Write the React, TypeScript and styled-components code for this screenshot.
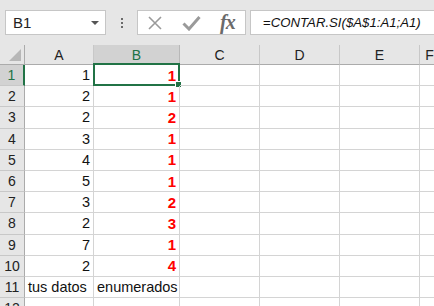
import styled, { createGlobalStyle } from "styled-components";

const GlobalStyle = createGlobalStyle`
  html, body {
    margin: 0;
    padding: 0;
    background: #e6e6e6;
    overflow: hidden;
  }
  body {
    font-family: "Liberation Sans", Arial, sans-serif;
  }
`;

const GREEN = "#217346";
const GRID = "#d4d4d4";
const HEAD_LINE = "#ababab";

// column widths incl. right border: header, A, B, C, D, E, F (partial)
const COLS = [25, 69, 86, 80, 80, 80, 20];
const LETTERS = ["A", "B", "C", "D", "E", "F"];

type Row = { a: string, b: string };

const rows: Row[] = [
    { a: "1", b: "1" },
    { a: "2", b: "1" },
    { a: "2", b: "2" },
    { a: "3", b: "1" },
    { a: "4", b: "1" },
    { a: "5", b: "1" },
    { a: "3", b: "2" },
    { a: "2", b: "3" },
    { a: "7", b: "1" },
    { a: "2", b: "4" },
];

const Page = styled.div`
  width: 434px;
  height: 306px;
  overflow: hidden;
  display: flex;
  flex-direction: column;
`;

const Toolbar = styled.div`
  height: 45px;
  flex-shrink: 0;
  display: flex;
  align-items: flex-start;
  padding: 10px 0 0 5px;
  box-sizing: border-box;
  & > * {
    flex-shrink: 0;
  }
`;

const NameBox = styled.div`
  width: 101px;
  height: 25px;
  box-sizing: border-box;
  background: #fff;
  border: 1px solid #c6c6c6;
  display: flex;
  align-items: center;
  justify-content: space-between;
  padding: 0 6px 0 7px;
  font-size: 15px;
  color: #222;
`;

const Caret = styled.span`
  width: 0;
  height: 0;
  border-left: 4px solid transparent;
  border-right: 4px solid transparent;
  border-top: 4px solid #555;
`;

const Grip = styled.div`
  width: 31px;
  height: 25px;
  display: flex;
  flex-direction: column;
  align-items: center;
  justify-content: center;
  gap: 2px;
  span {
    width: 2px;
    height: 2px;
    background: #6a6a6a;
  }
`;

const ButtonBox = styled.div`
  width: 109px;
  height: 25px;
  box-sizing: border-box;
  background: #fff;
  border: 1px solid #c6c6c6;
  display: flex;
  align-items: center;
  padding-left: 9px;
  gap: 19px;
`;

const FormulaBox = styled.div`
  flex: 1 1 auto !important;
  min-width: 0;
  height: 25px;
  margin-left: 4px;
  box-sizing: border-box;
  background: #fff;
  border: 1px solid #c6c6c6;
  border-right: none;
  display: flex;
  align-items: center;
  padding-left: 12px;
  font-size: 13.2px;
  color: #111;
  white-space: nowrap;
  overflow: hidden;
  i {
    font-style: italic;
  }
`;

const Sheet = styled.div`
  flex-shrink: 0;
  display: grid;
  grid-template-columns: ${COLS.map((c) => `${c}px`).join(" ")};
  grid-template-rows: 20px;
  grid-auto-rows: 21.2px;
  background: #fff;
`;

const Corner = styled.div`
  background: #e6e6e6;
  border-right: 1px solid ${HEAD_LINE};
  border-bottom: 1px solid ${HEAD_LINE};
  box-sizing: border-box;
  position: relative;
  &::after {
    content: "";
    position: absolute;
    right: 3px;
    bottom: 3px;
    width: 0;
    height: 0;
    border-left: 12px solid transparent;
    border-bottom: 12px solid #b7b7b7;
  }
`;

const ColHead = styled.div<{ $active?: boolean }>`
  background: ${(p) => (p.$active ? "#d2d2d2" : "#e6e6e6")};
  color: ${(p) => (p.$active ? GREEN : "#222")};
  border-right: 1px solid ${(p) => (p.$active ? "#b8b8b8" : "#c8c8c8")};
  border-bottom: ${(p) => (p.$active ? `2px solid ${GREEN}` : `1px solid ${HEAD_LINE}`)};
  box-sizing: border-box;
  display: flex;
  align-items: center;
  justify-content: center;
  font-size: 14px;
  padding-top: 1px;
`;

const RowHead = styled.div<{ $active?: boolean }>`
  background: ${(p) => (p.$active ? "#d2d2d2" : "#e6e6e6")};
  color: ${(p) => (p.$active ? GREEN : "#222")};
  border-right: ${(p) => (p.$active ? `2px solid ${GREEN}` : `1px solid ${HEAD_LINE}`)};
  border-bottom: 1px solid #c8c8c8;
  box-sizing: border-box;
  display: flex;
  align-items: center;
  justify-content: center;
  font-size: 14px;
`;

const Cell = styled.div<{ $align?: "left" | "right", $red?: boolean }>`
  border-right: 1px solid ${GRID};
  border-bottom: 1px solid ${GRID};
  box-sizing: border-box;
  display: flex;
  align-items: center;
  justify-content: ${(p) => (p.$align === "right" ? "flex-end" : "flex-start")};
  padding: 0 3px 0 3px;
  font-size: ${(p) => (p.$red ? "15px" : "14.5px")};
  font-weight: ${(p) => (p.$red ? 700 : 400)};
  color: ${(p) => (p.$red ? "#ff0000" : "#111")};
  white-space: nowrap;
  position: relative;
`;

// selection frame over the active cell
const Selection = styled.div`
  position: absolute;
  left: -1px;
  top: -2px;
  right: -1px;
  bottom: -1px;
  border: 2px solid ${GREEN};
  pointer-events: none;
  &::after {
    content: "";
    position: absolute;
    right: -4px;
    bottom: -4px;
    width: 5px;
    height: 5px;
    background: ${GREEN};
    border: 1px solid #fff;
  }
`;

function CrossIcon() {
    return (
        <svg width="16" height="16" viewBox="0 0 16 16">
            <path d="M2 2 L14 14 M14 2 L2 14" stroke="#9a9a9a" strokeWidth="1.6" fill="none" />
        </svg>
    );
}

function CheckIcon() {
    return (
        <svg width="19" height="16" viewBox="0 0 19 16">
            <path d="M1.5 8.5 L7 14 L17.5 2" stroke="#9a9a9a" strokeWidth="3" fill="none" />
        </svg>
    );
}

const Fx = styled.span`
  font-family: "Liberation Serif", "Times New Roman", serif;
  font-style: italic;
  font-weight: 700;
  font-size: 20px;
  color: #6a6a6a;
  letter-spacing: -1px;
`;

function App() {
    return (
        <Page>
            <GlobalStyle />
            <Toolbar>
                <NameBox>
                    B1
                    <Caret />
                </NameBox>
                <Grip>
                    <span />
                    <span />
                    <span />
                </Grip>
                <ButtonBox>
                    <CrossIcon />
                    <CheckIcon />
                    <Fx>fx</Fx>
                </ButtonBox>
                <FormulaBox>
                    =<i>CONTAR.SI($A$1:A1;A1)</i>
                </FormulaBox>
            </Toolbar>
            <Sheet>
                <Corner />
                {LETTERS.map((l) => (
                    <ColHead key={l} $active={l === "B"}>{l}</ColHead>
                ))}
                {rows.map((r, i) => (
                    <>
                        <RowHead key={`h${i}`} $active={i === 0}>{i + 1}</RowHead>
                        <Cell key={`a${i}`} $align="right">{r.a}</Cell>
                        <Cell key={`b${i}`} $align="right" $red>
                            {r.b}
                            {i === 0 && <Selection />}
                        </Cell>
                        <Cell key={`c${i}`} />
                        <Cell key={`d${i}`} />
                        <Cell key={`e${i}`} />
                        <Cell key={`f${i}`} />
                    </>
                ))}
                <RowHead>11</RowHead>
                <Cell>tus datos</Cell>
                <Cell>enumerados</Cell>
                <Cell />
                <Cell />
                <Cell />
                <Cell />
                <RowHead>12</RowHead>
                <Cell />
                <Cell />
                <Cell />
                <Cell />
                <Cell />
                <Cell />
            </Sheet>
        </Page>
    );
}

export default App;
